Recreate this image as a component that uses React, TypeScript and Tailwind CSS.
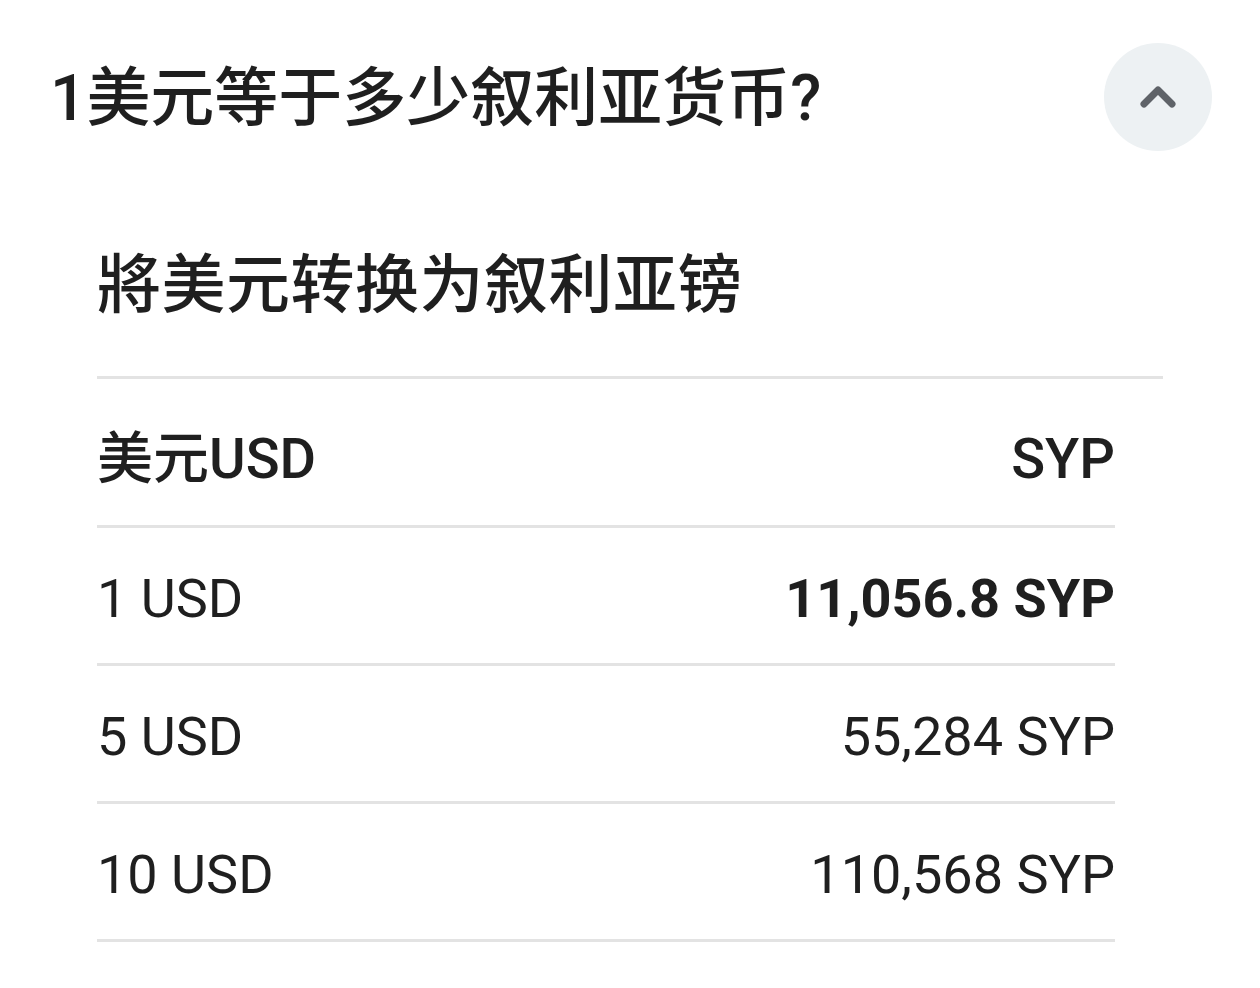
import { ChevronUp } from 'lucide-react';

const rows = [
  { from: '1 USD', to: '11,056.8 SYP', bold: true },
  { from: '5 USD', to: '55,284 SYP', bold: false },
  { from: '10 USD', to: '110,568 SYP', bold: false },
];

const font = { fontFamily: 'Roboto, "Noto Sans CJK SC", sans-serif' };

export default function App() {
  return (
    <div className="h-[988px] w-[1260px] overflow-hidden bg-white text-[#1f1f1f]" style={font}>
      <div className="flex items-start justify-between pl-[50px] pr-[48px] pt-[43px]">
        <h1 className="mt-[16px] text-[64px] font-medium leading-[80px]">1美元等于多少叙利亚货币?</h1>
        <button className="flex h-[108px] w-[108px] items-center justify-center rounded-full bg-[#edf1f3]">
          <ChevronUp className="h-[56px] w-[56px] text-[#5f6368]" strokeWidth={3} />
        </button>
      </div>

      <div className="pl-[97px] pr-[97px]">
        <h2 className="mt-[95px] text-[64px] font-medium leading-[80px] tracking-[0.5px]">將美元转换为叙利亚镑</h2>
        <div className="mt-[50px] h-[3px] bg-[#e3e3e3]" />
        <div className="mr-[48px]">
          <div className="flex h-[149px] items-center justify-between border-b-[3px] border-[#e3e3e3] pt-[14px] text-[56px] font-medium">
            <span>美元USD</span>
            <span>SYP</span>
          </div>
          {rows.map((r) => (
            <div
              key={r.from}
              className="flex h-[138px] items-center justify-between border-b-[3px] border-[#e3e3e3] pt-[6px] text-[54px]"
            >
              <span>{r.from}</span>
              <span className={r.bold ? 'font-bold' : ''}>{r.to}</span>
            </div>
          ))}
        </div>
      </div>
    </div>
  );
}
